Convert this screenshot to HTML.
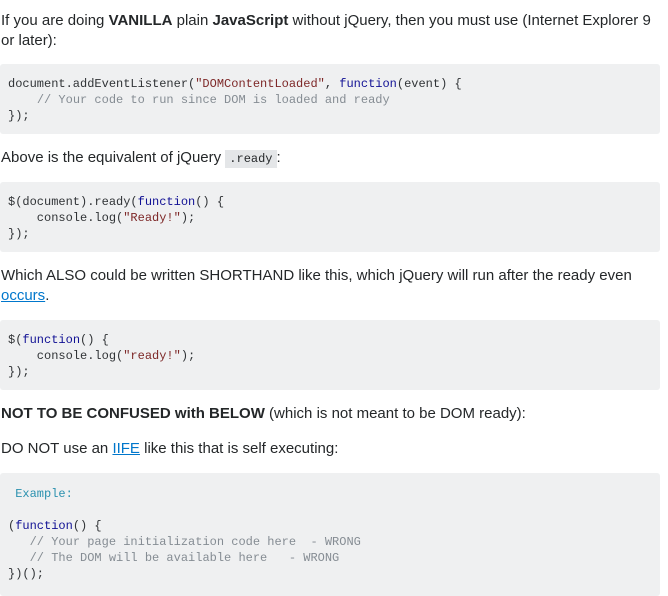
<!DOCTYPE html>
<html><head><meta charset="utf-8"><style>
body{margin:0;width:668px;height:592px;overflow:hidden;background:#fff;font-family:"Liberation Sans",Arial,sans-serif;font-size:15px;color:#242729;position:relative}
p{margin:0;position:absolute;left:1px;line-height:19.5px;width:665px}
pre{margin:0;position:absolute;left:0;width:644px;background:#eff0f1;border-radius:3px;padding:0 8px;font-family:"Liberation Mono",monospace;font-size:12px;line-height:16px;color:#303336}
.s{color:#7d2727}.k{color:#101094}.c{color:#858c93}.e{color:#2b91af}
a{color:#0077cc;text-decoration:underline}
code{font-family:"Liberation Mono",monospace;font-size:12px;background:#e4e6e8;padding:2px 4px}
</style></head><body>
<p style="top:11px">If you are doing <b>VANILLA</b> plain <b>JavaScript</b> without jQuery, then you must use (Internet Explorer 9 or later):</p>
<pre style="top:64px;height:46px;padding-top:12px;padding-bottom:12px">document.addEventListener(<span class="s">"DOMContentLoaded"</span>, <span class="k">function</span>(event) {
    <span class="c">// Your code to run since DOM is loaded and ready</span>
});</pre>
<p style="top:148px">Above is the equivalent of jQuery <code>.ready</code>:</p>
<pre style="top:182px;height:46px;padding-top:12px;padding-bottom:12px">$(document).ready(<span class="k">function</span>() {
    console.log(<span class="s">"Ready!"</span>);
});</pre>
<p style="top:266px">Which ALSO could be written SHORTHAND like this, which jQuery will run after the ready even <a>occurs</a>.</p>
<pre style="top:320px;height:46px;padding-top:12px;padding-bottom:12px">$(<span class="k">function</span>() {
    console.log(<span class="s">"ready!"</span>);
});</pre>
<p style="top:404px"><b>NOT TO BE CONFUSED with BELOW</b> (which is not meant to be DOM ready):</p>
<p style="top:439px">DO NOT use an <a>IIFE</a> like this that is self executing:</p>
<pre style="top:473px;height:110px;padding-top:13px"> <span class="e">Example:</span>

(<span class="k">function</span>() {
   <span class="c">// Your page initialization code here  - WRONG</span>
   <span class="c">// The DOM will be available here   - WRONG</span>
})();</pre>
</body></html>
